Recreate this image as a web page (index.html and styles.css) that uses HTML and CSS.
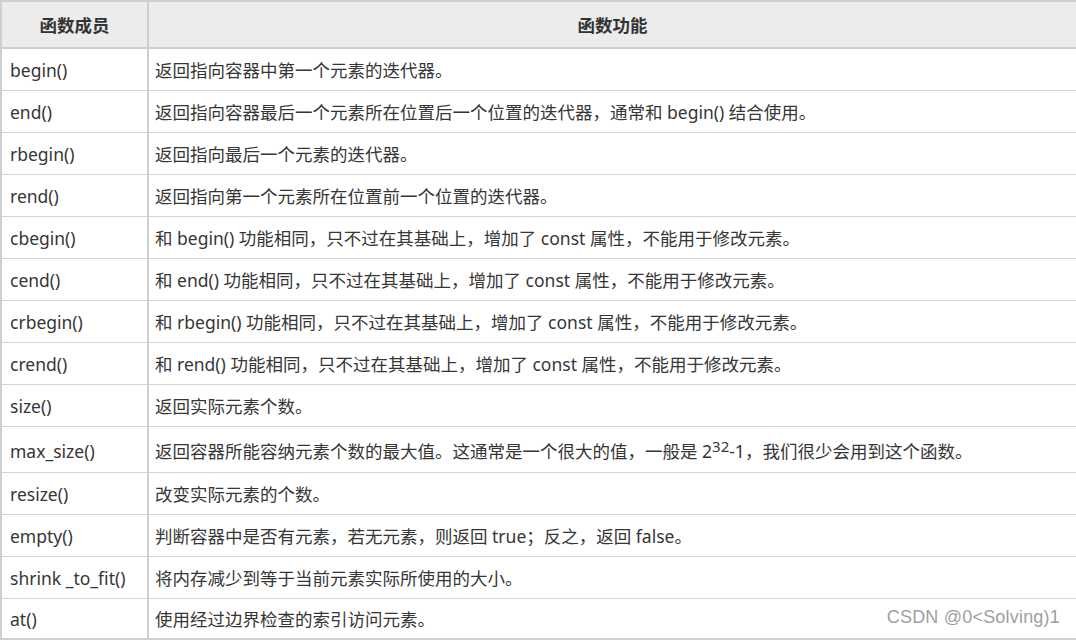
FILE: index.html
```html
<!DOCTYPE html>
<html lang="zh-CN">
<head>
<meta charset="utf-8">
<title>vector 成员函数</title>
<link rel="stylesheet" href="styles.css">
</head>
<body>
<div class="wrap">
<table class="fn-table">
  <thead>
    <tr><th class="c1">函数成员</th><th class="c2">函数功能</th></tr>
  </thead>
  <tbody>
    <tr><td class="c1">begin()</td><td class="c2">返回指向容器中第一个元素的迭代器。</td></tr>
    <tr><td class="c1">end()</td><td class="c2">返回指向容器最后一个元素所在位置后一个位置的迭代器，通常和 begin() 结合使用。</td></tr>
    <tr><td class="c1">rbegin()</td><td class="c2">返回指向最后一个元素的迭代器。</td></tr>
    <tr><td class="c1">rend()</td><td class="c2">返回指向第一个元素所在位置前一个位置的迭代器。</td></tr>
    <tr><td class="c1">cbegin()</td><td class="c2">和 begin() 功能相同，只不过在其基础上，增加了 const 属性，不能用于修改元素。</td></tr>
    <tr><td class="c1">cend()</td><td class="c2">和 end() 功能相同，只不过在其基础上，增加了 const 属性，不能用于修改元素。</td></tr>
    <tr><td class="c1">crbegin()</td><td class="c2">和 rbegin() 功能相同，只不过在其基础上，增加了 const 属性，不能用于修改元素。</td></tr>
    <tr><td class="c1">crend()</td><td class="c2">和 rend() 功能相同，只不过在其基础上，增加了 const 属性，不能用于修改元素。</td></tr>
    <tr><td class="c1">size()</td><td class="c2">返回实际元素个数。</td></tr>
    <tr class="tall"><td class="c1">max_size()</td><td class="c2">返回容器所能容纳元素个数的最大值。这通常是一个很大的值，一般是 2<sup>32</sup>-1，我们很少会用到这个函数。</td></tr>
    <tr><td class="c1">resize()</td><td class="c2">改变实际元素的个数。</td></tr>
    <tr><td class="c1">empty()</td><td class="c2">判断容器中是否有元素，若无元素，则返回 true；反之，返回 false。</td></tr>
    <tr><td class="c1">shrink _to_fit()</td><td class="c2">将内存减少到等于当前元素实际所使用的大小。</td></tr>
    <tr class="last"><td class="c1">at()</td><td class="c2">使用经过边界检查的索引访问元素。</td></tr>
  </tbody>
</table>
<div class="watermark">CSDN @0&lt;Solving)1</div>
</div>
</body>
</html>
```

FILE: styles.css
```css
html, body {
  margin: 0;
  padding: 0;
  background: #ffffff;
  overflow: hidden;
}

.wrap {
  position: relative;
  width: 1076px;
  height: 640px;
  overflow: hidden;
}

.fn-table {
  width: 1076px;
  border-collapse: separate;
  border-spacing: 0;
  border-top: 2px solid #cfcfcf;
  border-left: 2px solid #cfcfcf;
  font-family: "Noto Sans", "Noto Sans CJK SC", sans-serif;
  font-size: 17.5px;
  color: #363636;
  table-layout: fixed;
}

.fn-table th,
.fn-table td {
  padding: 0 8px;
  text-align: left;
  white-space: nowrap;
  line-height: 20px;
  vertical-align: middle;
  box-sizing: border-box;
}

.fn-table .c1 {
  width: 147px;
  border-right: 2px solid #cfcfcf;
}

.fn-table th {
  background: #ececec;
  font-weight: bold;
  text-align: center;
  height: 47px;
  border-bottom: 2px solid #cfcfcf;
  color: #333333;
}

.fn-table td {
  height: 42px;
  border-bottom: 1px solid #d4d4d4;
}

.fn-table td.c2 {
  padding-left: 6px;
}

.fn-table tr.tall td {
  height: 46px;
  padding-top: 3px;
}

.fn-table tr.last td {
  border-bottom: 2px solid #cfcfcf;
  height: 41px;
}

.fn-table sup {
  font-size: 15px;
  line-height: 0;
  vertical-align: 6px;
}

.watermark {
  position: absolute;
  right: 16px;
  top: 607px;
  font-family: "Liberation Sans", "DejaVu Sans", sans-serif;
  font-size: 18px;
  color: #a0a0a0;
  text-shadow: 0 0 1px #ffffff;
  letter-spacing: 0.2px;
}
```
